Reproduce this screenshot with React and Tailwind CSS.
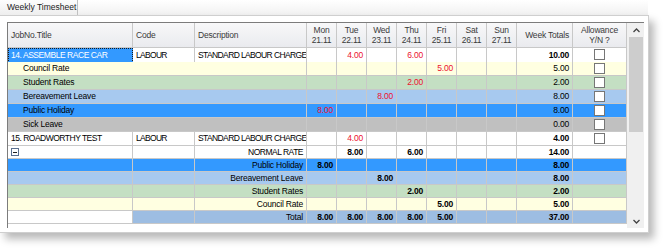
import clsx from 'clsx'

const COLS = 'grid grid-cols-[125px_62px_112px_30px_30px_30px_30px_30px_30px_30px_56px_54px]'

const BG = {
  white: 'bg-white',
  yellow: 'bg-[#ffffe1]',
  green: 'bg-[#c4dfc3]',
  light: 'bg-[#a7c9ef]',
  blue: 'bg-[#3399ff]',
  gray: 'bg-[#c0c0c0]',
  total: 'bg-[#9dbde2]',
}

const DAYS = [
  ['Mon', '21.11'],
  ['Tue', '22.11'],
  ['Wed', '23.11'],
  ['Thu', '24.11'],
  ['Fri', '25.11'],
  ['Sat', '26.11'],
  ['Sun', '27.11'],
]

function Cell({ className, children }) {
  return (
    <div className={clsx('flex items-center overflow-hidden whitespace-nowrap border-r border-b border-[#c8c8c8] px-[3px]', className)}>
      {children}
    </div>
  )
}

function Check() {
  return <span className="block w-[11px] h-[11px] border border-[#767676] bg-white" />
}

function DayCells({ values, red, bold }) {
  return values.map((v, i) => (
    <Cell key={i} className={clsx('justify-end', red && 'text-[#ec1130]', bold && 'font-bold')}>
      {v}
    </Cell>
  ))
}

function days(index, value) {
  const arr = ['', '', '', '', '', '', '']
  if (index >= 0) arr[index] = value
  return arr
}

// parent job row
function JobRow({ job, values, total, selected, tall }) {
  return (
    <div className={clsx(COLS, 'bg-white', tall ? 'h-[14px]' : 'h-[13px]')}>
      {selected ? (
        <div className="flex items-center border border-dotted border-[#1a1a1a] bg-[#3399ff] px-[2px] text-white whitespace-nowrap tracking-[-0.45px]">
          {job}
        </div>
      ) : (
        <Cell className="tracking-[-0.5px]">{job}</Cell>
      )}
      <Cell className="tracking-[-0.7px]">LABOUR</Cell>
      <Cell className="tracking-[-0.62px]">STANDARD LABOUR CHARGE</Cell>
      <DayCells values={values} red />
      <Cell className="justify-end font-bold">{total}</Cell>
      <Cell className="justify-center"><Check /></Cell>
    </div>
  )
}

// rate row under the first job (merged title cell)
function RateRow({ label, color, index, value, total }) {
  return (
    <div className={clsx(COLS, BG[color], 'h-[14px]')}>
      <Cell className="col-span-3 pl-[15px]">{label}</Cell>
      <DayCells values={days(index, value)} red />
      <Cell className="justify-end">{total}</Cell>
      <Cell className="justify-center"><Check /></Cell>
    </div>
  )
}

// summary rows under the second job
function SumRow({ label, color, values, total, icon, whiteFirst, caps }) {
  return (
    <div className={clsx(COLS, BG[color], 'h-[13px]')}>
      <Cell className={clsx(whiteFirst && 'bg-white')}>
        {icon && (
          <span className="flex items-center justify-center w-[8px] h-[8px] border border-[#5a6f8f] bg-white">
            <span className="block w-[4px] h-px bg-[#222]" />
          </span>
        )}
      </Cell>
      <Cell />
      <Cell className={clsx('justify-end', caps && 'tracking-[-0.5px]')}>{label}</Cell>
      <DayCells values={values} bold />
      <Cell className="justify-end font-bold">{total}</Cell>
      <Cell />
    </div>
  )
}

function Header() {
  return (
    <div className={clsx(COLS, 'h-[25px] bg-gradient-to-b from-[#f8f8f9] to-[#e9eaee] text-[#3a3a3a]')}>
      <Cell className="border-[#c4c4c4]">JobNo.Title</Cell>
      <Cell className="border-[#c4c4c4]">Code</Cell>
      <Cell className="border-[#c4c4c4]">Description</Cell>
      {DAYS.map(([d, n]) => (
        <Cell key={d} className="flex-col justify-center leading-[10px] border-[#c4c4c4]">
          <span>{d}</span>
          <span>{n}</span>
        </Cell>
      ))}
      <Cell className="justify-end border-[#c4c4c4]">Week Totals</Cell>
      <Cell className="flex-col justify-center leading-[10px] border-[#c4c4c4]">
        <span>Allowance</span>
        <span>Y/N ?</span>
      </Cell>
    </div>
  )
}

function Scrollbar() {
  return (
    <div className="flex w-[17px] flex-col bg-[#f0f0f0] pl-[2px]">
      <div className="flex h-[14px] items-center justify-center">
        <svg width="7" height="5" viewBox="0 0 7 5"><path d="M0.5 4 L3.5 1 L6.5 4" fill="none" stroke="#444" strokeWidth="1.3" /></svg>
      </div>
      <div className="h-[95px] w-[14px] bg-[#cdcdcd]" />
      <div className="flex-1" />
      <div className="flex h-[14px] items-center justify-center">
        <svg width="7" height="5" viewBox="0 0 7 5"><path d="M0.5 1 L3.5 4 L6.5 1" fill="none" stroke="#444" strokeWidth="1.3" /></svg>
      </div>
    </div>
  )
}

export default function App() {
  return (
    <div className="relative h-[252px] w-[665px] overflow-hidden bg-white font-['Liberation_Sans',Arial,sans-serif] text-[8.5px] tracking-[-0.2px] text-black">
      {/* tab strip */}
      <div className="flex h-[15px] w-[648px] bg-gradient-to-b from-white to-[#f1f1f1]">
        <div className="flex w-[78px] items-center border-r border-[#c0c0c0] bg-gradient-to-b from-[#fdfdfd] to-[#eeeeee] pl-[7px] text-[#222] tracking-normal">
          Weekly Timesheet
        </div>
      </div>

      {/* panel */}
      <div className="h-[218px] w-[649px] border-t border-r border-b border-[#cfcfcf] bg-white pt-[6px] pl-[7px] shadow-[5px_6px_8px_rgba(0,0,0,0.28)]">
        <div className="flex h-[206px] w-[637px] border-t border-l border-[#7c7c7c]">
          <div className="flex w-[619px] flex-col">
            <Header />
            <JobRow job="14. ASSEMBLE RACE CAR" values={['', '4.00', '', '6.00', '', '', '']} total="10.00" selected tall />
            <RateRow label="Council Rate" color="yellow" index={4} value="5.00" total="5.00" />
            <RateRow label="Student Rates" color="green" index={3} value="2.00" total="2.00" />
            <RateRow label="Bereavement Leave" color="light" index={2} value="8.00" total="8.00" />
            <RateRow label="Public Holiday" color="blue" index={0} value="8.00" total="8.00" />
            <RateRow label="Sick Leave" color="gray" index={-1} value="" total="0.00" />
            <JobRow job="15. ROADWORTHY TEST" values={days(1, '4.00')} total="4.00" tall />
            <SumRow label="NORMAL RATE" color="white" values={['', '8.00', '', '6.00', '', '', '']} total="14.00" icon caps />
            <SumRow label="Public Holiday" color="blue" values={days(0, '8.00')} total="8.00" />
            <SumRow label="Bereavement Leave" color="light" values={days(2, '8.00')} total="8.00" />
            <SumRow label="Student Rates" color="green" values={days(3, '2.00')} total="2.00" />
            <SumRow label="Council Rate" color="yellow" values={days(4, '5.00')} total="5.00" />
            <SumRow label="Total" color="total" values={['8.00', '8.00', '8.00', '8.00', '5.00', '', '']} total="37.00" whiteFirst />
          </div>
          <Scrollbar />
        </div>
      </div>
    </div>
  )
}
